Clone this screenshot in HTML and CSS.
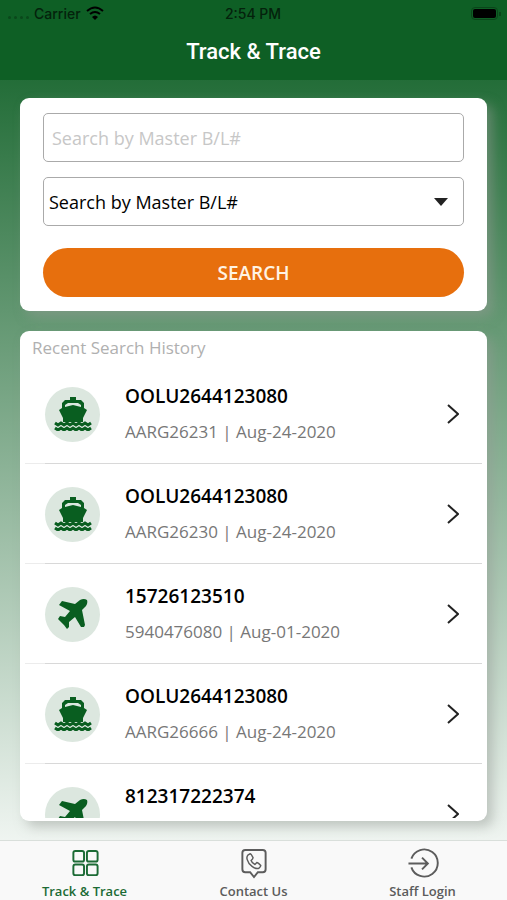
FILE: index.html
```html
<!DOCTYPE html>
<html lang="en">
<head>
<meta charset="utf-8">
<meta name="viewport" content="width=device-width, initial-scale=1">
<title>Track &amp; Trace</title>
<link rel="stylesheet" href="styles.css">
</head>
<body>
<svg class="sprite" aria-hidden="true">
  <symbol id="ship" viewBox="0 0 38 34">
    <path d="M16 0h6v3h5l3 3v5l3 2-4 8v4H9v-4l-4-8 3-2V6l3-3h5z"/>
    <path class="cabin" d="M11 10V8l3-2h10l3 2v2l-8-2z"/>
    <path class="wave" d="M1 26l3 2 3-2 3 2 3-2 3 2 3-2 3 2 3-2 3 2 3-2 3 2 3-2M1 31l3 2 3-2 3 2 3-2 3 2 3-2 3 2 3-2 3 2 3-2 3 2 3-2"/>
  </symbol>
  <symbol id="plane" viewBox="0 0 30 30">
    <path d="M4 2l13 3 5-4q4-2 7 0 1 3-1 6l-4 4 3 15-1 2h-3l-6-10-6 5v5l-2 2-3-4-6-6 2-3 5 1 5-6L1 6z"/>
  </symbol>
  <symbol id="chevron" viewBox="0 0 12 20"><path d="M1 1l10 9-10 9"/></symbol>
</svg>
<header class="header">
  <div class="status">
    <div class="carrier">
      <span class="signal"><i></i><i></i><i></i><i></i></span>
      <span>Carrier</span>
      <svg class="wifi" viewBox="0 0 18 14" aria-hidden="true"><path d="M1 5q8-7 16 0M4 8q5-4 10 0"/><path class="dot" d="M6 11q3-3 6 0l-3 3z"/></svg>
    </div>
    <span>2:54 PM</span>
    <div class="power"><span class="battery"></span></div>
  </div>
  <h1>Track &amp; Trace</h1>
</header>
<main class="content">
  <form class="card search">
    <input class="field" type="text" placeholder="Search by Master B/L#" aria-label="Search number">
    <div class="picker">
      <select class="field" aria-label="Search type"><option>Search by Master B/L#</option></select>
      <svg viewBox="0 0 14 8" aria-hidden="true"><path d="M0 0h14L7 8z"/></svg>
    </div>
    <button type="button">SEARCH</button>
  </form>
  <section class="card history">
    <h2>Recent Search History</h2>
    <ul>
      <li><a href="#"><span class="badge"><svg class="ship"><use href="#ship"/></svg></span><span class="info"><strong>OOLU2644123080</strong><span>AARG26231 | Aug-24-2020</span></span><svg class="chevron"><use href="#chevron"/></svg></a></li>
      <li><a href="#"><span class="badge"><svg class="ship"><use href="#ship"/></svg></span><span class="info"><strong>OOLU2644123080</strong><span>AARG26230 | Aug-24-2020</span></span><svg class="chevron"><use href="#chevron"/></svg></a></li>
      <li><a href="#"><span class="badge"><svg class="plane"><use href="#plane"/></svg></span><span class="info"><strong>15726123510</strong><span>5940476080 | Aug-01-2020</span></span><svg class="chevron"><use href="#chevron"/></svg></a></li>
      <li><a href="#"><span class="badge"><svg class="ship"><use href="#ship"/></svg></span><span class="info"><strong>OOLU2644123080</strong><span>AARG26666 | Aug-24-2020</span></span><svg class="chevron"><use href="#chevron"/></svg></a></li>
      <li><a href="#"><span class="badge"><svg class="plane"><use href="#plane"/></svg></span><span class="info"><strong>812317222374</strong></span><svg class="chevron"><use href="#chevron"/></svg></a></li>
    </ul>
  </section>
</main>
<nav class="tabs">
  <a class="active" href="#">
    <svg viewBox="0 0 32 32" aria-hidden="true"><rect x="4" y="3" width="11" height="11" rx="2"/><rect x="18" y="3" width="11" height="11" rx="2"/><rect x="4" y="17" width="11" height="11" rx="2"/><rect x="18" y="17" width="11" height="11" rx="2"/></svg>
    <span>Track &amp; Trace</span>
  </a>
  <a href="#">
    <svg viewBox="0 0 32 32" aria-hidden="true"><path d="M7 2h18q3 0 3 3v17q0 3-3 3h-5l-4 5-4-5H7q-3 0-3-3V5q0-3 3-3z"/><path class="thin" d="M10 7l2-1q1 0 3 4 0 1-2 3 1 3 4 4l2-2q1 0 4 3 0 1-2 3-3 1-7-2-4-3-5-7-1-3 1-5z"/></svg>
    <span>Contact Us</span>
  </a>
  <a href="#">
    <svg viewBox="0 0 32 32" aria-hidden="true"><path d="M4 11a14 14 0 1 1 0 9M1 16h20M15 10l6 6-6 6"/></svg>
    <span>Staff Login</span>
  </a>
</nav>
</body>
</html>
```

FILE: styles.css
```css
* { box-sizing: border-box; }

body {
  margin: 0;
  height: 100vh;
  display: flex;
  flex-direction: column;
  font-family: "Open Sans", "Noto Sans", sans-serif;
  font-size: 18px;
  color: #000;
  background: linear-gradient(#0e5f25, #fff);
}

a { color: inherit; text-decoration: none; }

.sprite { position: absolute; width: 0; height: 0; }

.header {
  flex: none;
  height: 80px;
  background: #0e5f25;
  font-family: Inter, sans-serif;
}

.status {
  display: grid;
  grid-template-columns: 1fr auto 1fr;
  align-items: center;
  height: 26px;
  padding: 0 9px 0 8px;
  font-size: 14px;
  font-weight: 500;
  color: #04220c;
}

.carrier { display: flex; align-items: center; gap: 5px; }
.signal { display: flex; gap: 3px; padding-top: 8px; }
.signal i { width: 3px; height: 3px; border-radius: 50%; background: #0a481b; }
.wifi { width: 18px; height: 14px; fill: none; stroke: #000; stroke-width: 2; }
.wifi .dot { fill: #000; stroke: none; }
.power { display: flex; justify-content: flex-end; }

.battery {
  position: relative;
  width: 27px;
  height: 13px;
  padding: 1px;
  border: 1px solid #0a461a;
  border-radius: 4px;
  background: #000 content-box;
}

.battery::after {
  content: "";
  position: absolute;
  left: 27px;
  top: 4px;
  width: 2px;
  height: 4px;
  background: #0a461a;
}

h1 {
  margin: 0;
  font-family: Roboto, sans-serif;
  font-size: 22px;
  font-weight: 500;
  line-height: 52px;
  text-align: center;
  color: #fff;
}

.content {
  flex: 1;
  min-height: 0;
  display: flex;
  flex-direction: column;
  gap: 20px;
  padding: 18px 20px 19px;
}

.card {
  border-radius: 9px;
  background: #fff;
  box-shadow: 6px 6px 12px rgba(150, 155, 150, 0.5);
}

.search {
  display: flex;
  flex-direction: column;
  padding: 15px 23px 14px;
}

.field {
  width: 100%;
  height: 49px;
  padding: 0 8px;
  border: 1px solid #aaa;
  border-radius: 5px;
  background: #fff;
  font: inherit;
  color: #000;
}

.field::placeholder { color: #c7c7c7; }

.picker { position: relative; margin: 15px 0 22px; }
.picker .field { display: block; appearance: none; padding: 0 5px; }
.picker svg {
  position: absolute;
  right: 16px;
  top: 21px;
  width: 14px;
  height: 8px;
  fill: #222;
  pointer-events: none;
}

.search button {
  height: 49px;
  border: 0;
  border-radius: 25px;
  background: #e76f0d;
  color: #fff3e3;
  font: inherit;
  font-size: 19px;
  font-weight: 600;
}

.history {
  flex: 1;
  min-height: 0;
  display: flex;
  flex-direction: column;
  padding: 0 5px 3px;
}

h2 {
  flex: none;
  margin: 0;
  padding: 0 7px;
  font-size: 17px;
  font-weight: 400;
  line-height: 33px;
  color: #b0b0b0;
}

.history ul {
  flex: 1;
  min-height: 0;
  margin: 0;
  padding: 0;
  overflow: hidden;
  list-style: none;
}

.history a {
  display: flex;
  align-items: center;
  height: 100px;
  padding: 0 23px 0 20px;
  background: linear-gradient(90deg, #ececec 20px, #d8d8d8 20px) bottom / 100% 1px no-repeat;
}

.badge {
  display: grid;
  place-items: center;
  width: 55px;
  height: 55px;
  border-radius: 50%;
  background: #dce7df;
}

.badge svg { fill: #095e20; }
.ship { width: 38px; height: 34px; }
.plane { width: 30px; height: 30px; }
.cabin { fill: #dce7df; }
.badge .wave, .wave { fill: none; stroke: #095e20; stroke-width: 3; }

.info {
  flex: 1;
  align-self: flex-start;
  display: flex;
  flex-direction: column;
  gap: 10px;
  padding: 20px 0 0 25px;
  line-height: 25px;
}

.info strong { font-size: 19px; font-weight: 600; }
.info span { font-size: 17px; color: #777; }

.chevron {
  width: 12px;
  height: 20px;
  fill: none;
  stroke: #222;
  stroke-width: 2;
}

.tabs {
  flex: none;
  display: grid;
  grid-template-columns: repeat(3, 1fr);
  height: 60px;
  border-top: 1px solid #d9dfdb;
  background: #f9f9f9;
  color: #5c5c5c;
}

.tabs a {
  display: flex;
  flex-direction: column;
  align-items: center;
  padding-top: 7px;
  font-size: 13px;
  font-weight: 600;
  line-height: 24px;
}

.tabs .active { color: #1c6b35; }

.tabs svg {
  width: 32px;
  height: 31px;
  fill: none;
  stroke: currentColor;
  stroke-width: 2;
}

.tabs .thin { stroke-width: 1.5; }
```
